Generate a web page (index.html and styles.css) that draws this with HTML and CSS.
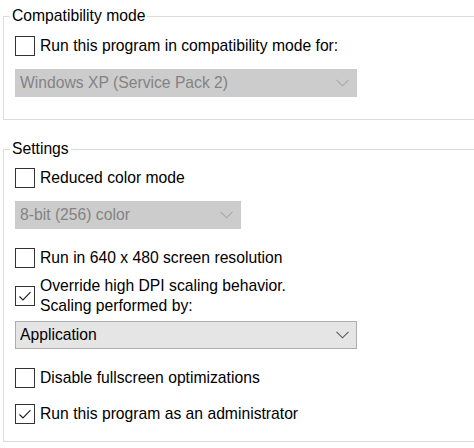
FILE: index.html
```html
<!DOCTYPE html>
<html>
<head>
<meta charset="utf-8">
<link rel="stylesheet" href="styles.css">
</head>
<body>
<div class="page">
  <fieldset class="group group-compat">
    <legend class="legend">Compatibility mode</legend>
    <div class="row">
      <span class="box"></span>
      <span class="label">Run this program in compatibility mode for:</span>
    </div>
    <div class="select select-disabled select-wide">
      <span class="select-text">Windows XP (Service Pack 2)</span>
      <svg class="chev" width="13" height="8" viewBox="0 0 13 8"><path d="M0.5 0.8 L6.5 6.8 L12.5 0.8" fill="none" stroke="#a8a8a8" stroke-width="1.1"/></svg>
    </div>
  </fieldset>

  <fieldset class="group group-settings">
    <legend class="legend">Settings</legend>
    <div class="row">
      <span class="box"></span>
      <span class="label">Reduced color mode</span>
    </div>
    <div class="select select-disabled select-narrow">
      <span class="select-text">8-bit (256) color</span>
      <svg class="chev" width="13" height="8" viewBox="0 0 13 8"><path d="M0.5 0.8 L6.5 6.8 L12.5 0.8" fill="none" stroke="#a8a8a8" stroke-width="1.1"/></svg>
    </div>
    <div class="row row-gap">
      <span class="box"></span>
      <span class="label">Run in 640 x 480 screen resolution</span>
    </div>
    <div class="row row-gap-tight">
      <span class="box"><svg class="tick" width="18" height="18" viewBox="0 0 18 18"><path d="M3.5 9.5 L7 13 L14.5 5.2" fill="none" stroke="#222" stroke-width="1.2"/></svg></span>
      <span class="label">Override high DPI scaling behavior.<br>Scaling performed by:</span>
    </div>
    <div class="select select-wide select-active">
      <span class="select-text">Application</span>
      <svg class="chev" width="13" height="8" viewBox="0 0 13 8"><path d="M0.5 0.8 L6.5 6.8 L12.5 0.8" fill="none" stroke="#5a5a5a" stroke-width="1.1"/></svg>
    </div>
    <div class="row row-gap">
      <span class="box"></span>
      <span class="label">Disable fullscreen optimizations</span>
    </div>
    <div class="row row-gap-small">
      <span class="box"><svg class="tick" width="18" height="18" viewBox="0 0 18 18"><path d="M3.5 9.5 L7 13 L14.5 5.2" fill="none" stroke="#222" stroke-width="1.2"/></svg></span>
      <span class="label">Run this program as an administrator</span>
    </div>
  </fieldset>
</div>
</body>
</html>
```

FILE: styles.css
```css
html, body {
  margin: 0;
  padding: 0;
  background: #ffffff;
}

body {
  font-family: "Liberation Sans", Arial, sans-serif;
  font-size: 15.7px;
  line-height: 20px;
  color: #000000;
  width: 474px;
  height: 448px;
  overflow: hidden;
}

.page {
  padding: 6px 0 0 3px;
}

.group {
  margin: 0;
  padding: 0 0 0 11px;
  border: 1px solid #dcdcdc;
  border-right: none;
  width: 471px;
  box-sizing: border-box;
  min-width: 0;
}

.group-compat {
  padding-top: 10px;
  padding-bottom: 22px;
}

.group-settings {
  margin-top: 19px;
  padding-top: 9px;
  padding-bottom: 17px;
}

.legend {
  padding: 0 2px;
  margin-left: -5px;
  line-height: 20px;
}

.row {
  display: flex;
  align-items: center;
  gap: 5px;
}

.row-gap {
  margin-top: 19px;
}

.row-gap-tight {
  margin-top: 8px;
}

.row-gap-small {
  margin-top: 16px;
}

.box {
  width: 20px;
  height: 20px;
  box-sizing: border-box;
  border: 1px solid #333333;
  background: #ffffff;
  flex: none;
  display: flex;
  align-items: center;
  justify-content: center;
}

.tick {
  display: block;
}

.select {
  margin-top: 13px;
  height: 28px;
  box-sizing: border-box;
  display: flex;
  align-items: center;
  justify-content: space-between;
  padding: 0 7px 0 4px;
  border: 1px solid transparent;
}

.select-wide {
  width: 342px;
}

.select-narrow {
  width: 226px;
}

.select-disabled {
  background: #cccccc;
  border-color: #cccccc;
  color: #838383;
}

.select-active {
  background: #e5e5e5;
  border-color: #adadad;
  color: #000000;
  margin-top: 5px;
}

.select-text {
  line-height: 26px;
}

.chev {
  display: block;
}
```
